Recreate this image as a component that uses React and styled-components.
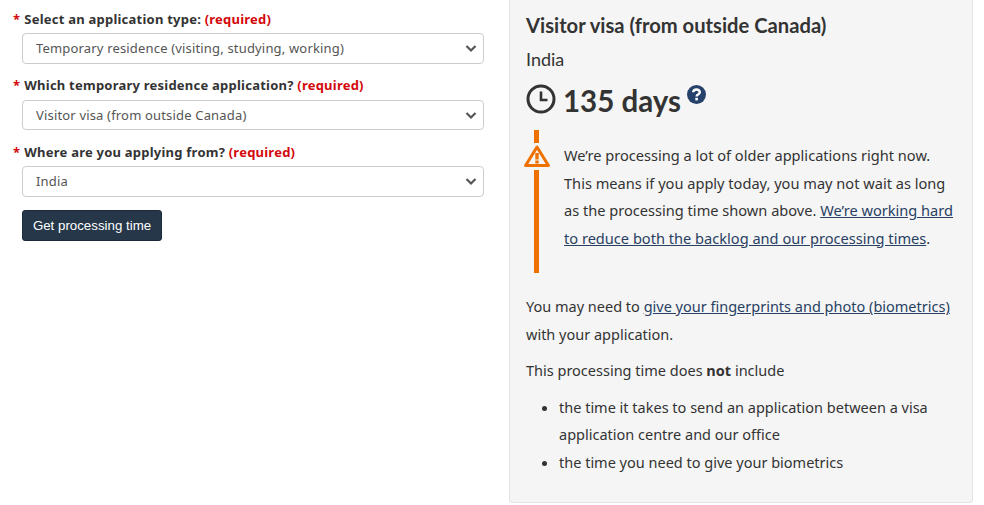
import React from 'react'
import styled, { createGlobalStyle } from 'styled-components'

const GlobalStyle = createGlobalStyle`
    html, body {
        margin: 0;
        padding: 0;
        background: #fff;
    }
    body {
        font-family: "Noto Sans", sans-serif;
        color: #333;
    }
`

const Page = styled.div`
    display: flex;
    align-items: flex-start;
    width: 984px;
    height: 505px;
    overflow: hidden;
`

const FormColumn = styled.form`
    width: 484px;
    margin-right: 25px;
    padding-top: 9.9px;
    flex-shrink: 0;
`

const Field = styled.div`
    margin-bottom: 12.8px;
`

const Label = styled.label`
    display: block;
    margin-left: 13px;
    font-size: 13px;
    line-height: 18px;
    font-weight: 700;
    color: #333;
    margin-bottom: 5.2px;
    letter-spacing: 0.23px;
`

const Required = styled.span`
    color: #d3080c;
`

const Star = styled(Required)`
    margin-right: 4px;
`

const SelectWrap = styled.div`
    position: relative;
    margin-left: 22px;
    height: 30.5px;
`

const Select = styled.select`
    appearance: none;
    display: block;
    box-sizing: border-box;
    width: 100%;
    height: 100%;
    padding: 0 13px;
    border: 1px solid #ccc;
    border-radius: 4px;
    background: #fff;
    font-family: "Noto Sans", sans-serif;
    font-size: 13px;
    letter-spacing: 0.17px;
    color: #555;
`

const Chevron = styled.svg`
    position: absolute;
    right: 7px;
    top: 50%;
    margin-top: -4px;
    width: 12px;
    height: 9px;
    pointer-events: none;
`

const Button = styled.button`
    display: block;
    box-sizing: border-box;
    margin: 13.2px 0 0 22px;
    width: 140px;
    height: 31px;
    padding: 0;
    border: 1px solid #1b2a3b;
    border-radius: 3px;
    background: #26374a;
    color: #fff;
    font-family: "Liberation Sans", Arial, sans-serif;
    font-size: 13.3px;
`

const Panel = styled.section`
    box-sizing: border-box;
    width: 464px;
    height: 503px;
    padding: 12px 16px 0;
    background: #f5f5f5;
    border: 1px solid #e3e3e3;
    border-top: 0;
    border-radius: 0 0 4px 4px;
    font-size: 14.5px;
    line-height: 27.5px;
`

const Title = styled.h2`
    margin: 0 0 8px;
    font-family: Lato, sans-serif;
    font-size: 20.2px;
    line-height: 26px;
    font-weight: 700;
    color: #333;
`

const Country = styled.p`
    margin: 0 0 6px;
    font-family: Lato, sans-serif;
    font-size: 18px;
    line-height: 27px;
    color: #333;
`

const Days = styled.div`
    display: flex;
    align-items: flex-start;
    height: 44px;
    margin-bottom: 7px;
    font-family: Lato, sans-serif;
    font-size: 29.5px;
    line-height: 44px;
    font-weight: 700;
    color: #333;
`

const ClockIcon = styled.svg`
    width: 30px;
    height: 30px;
    margin: 5px 7px 0 0;
`

const HelpIcon = styled.svg`
    width: 19px;
    height: 19px;
    margin: 6px 0 0 6px;
`

const Alert = styled.div`
    position: relative;
    box-sizing: border-box;
    height: 143px;
    margin: 0 0 20px 8px;
    padding: 12px 0 0 25px;
    border-left: 5px solid #ee7100;
    font-size: 14.6px;
`

const AlertIcon = styled.svg`
    position: absolute;
    left: -15px;
    top: 13px;
    width: 26px;
    height: 22px;
    padding: 2px 0 3px;
    background: #f5f5f5;
`

const Paragraph = styled.p`
    margin: 0 0 9px;
`

const Link = styled.a`
    color: #284162;
    text-decoration: underline;
`

const List = styled.ul`
    margin: 9px 0 0;
    padding: 0 0 0 33px;
`

export default function App() {
    const fields = [
        { label: 'Select an application type:', value: 'Temporary residence (visiting, studying, working)' },
        { label: 'Which temporary residence application?', value: 'Visitor visa (from outside Canada)' },
        { label: 'Where are you applying from?', value: 'India' },
    ]

    return (
        <Page>
            <GlobalStyle />
            <FormColumn onSubmit={e => e.preventDefault()}>
                {fields.map(field => (
                    <Field key={field.label}>
                        <Label>
                            <Star>*</Star>
                            {field.label} <Required>(required)</Required>
                        </Label>
                        <SelectWrap>
                            <Select defaultValue={field.value}>
                                <option>{field.value}</option>
                            </Select>
                            <Chevron viewBox="0 0 12 9">
                                <path d="M1.5 2 L6 6.5 L10.5 2" fill="none" stroke="#555" strokeWidth="2.2" />
                            </Chevron>
                        </SelectWrap>
                    </Field>
                ))}
                <Button type="submit">Get processing time</Button>
            </FormColumn>
            <Panel>
                <Title>Visitor visa (from outside Canada)</Title>
                <Country>India</Country>
                <Days>
                    <ClockIcon viewBox="0 0 30 30">
                        <circle cx="15" cy="15" r="13" fill="none" stroke="#333" strokeWidth="3" />
                        <path d="M15 7.5 V16 H21.5" fill="none" stroke="#333" strokeWidth="2.6" />
                    </ClockIcon>
                    135 days
                    <HelpIcon viewBox="0 0 19 19">
                        <circle cx="9.5" cy="9.5" r="9.5" fill="#26416a" />
                        <path d="M6.2 7.2 C6.4 3.6 12.8 3.6 12.8 7.2 C12.8 9.6 9.6 9.4 9.6 11.4" fill="none" stroke="#fff" strokeWidth="2.4" />
                        <rect x="8.3" y="12.8" width="2.6" height="2.6" fill="#fff" />
                    </HelpIcon>
                </Days>
                <Alert>
                    <AlertIcon viewBox="0 0 26 22">
                        <path d="M13 2 L24.4 20.5 H1.6 Z" fill="none" stroke="#ee7100" strokeWidth="3" strokeLinejoin="round" />
                        <rect x="11.3" y="8" width="3.4" height="6.5" fill="#ee7100" />
                        <rect x="11.3" y="15.5" width="3.4" height="3" fill="#ee7100" />
                    </AlertIcon>
                    We’re processing a lot of older applications right now. This means if you apply today, you may not wait as long as the processing time shown above. <Link>We’re working hard to reduce both the backlog and our processing times</Link>.
                </Alert>
                <Paragraph>
                    You may need to <Link>give your fingerprints and photo (biometrics)</Link> with your application.
                </Paragraph>
                <Paragraph>
                    This processing time does <strong>not</strong> include
                </Paragraph>
                <List>
                    <li>the time it takes to send an application between a visa application centre and our office</li>
                    <li>the time you need to give your biometrics</li>
                </List>
            </Panel>
        </Page>
    )
}
